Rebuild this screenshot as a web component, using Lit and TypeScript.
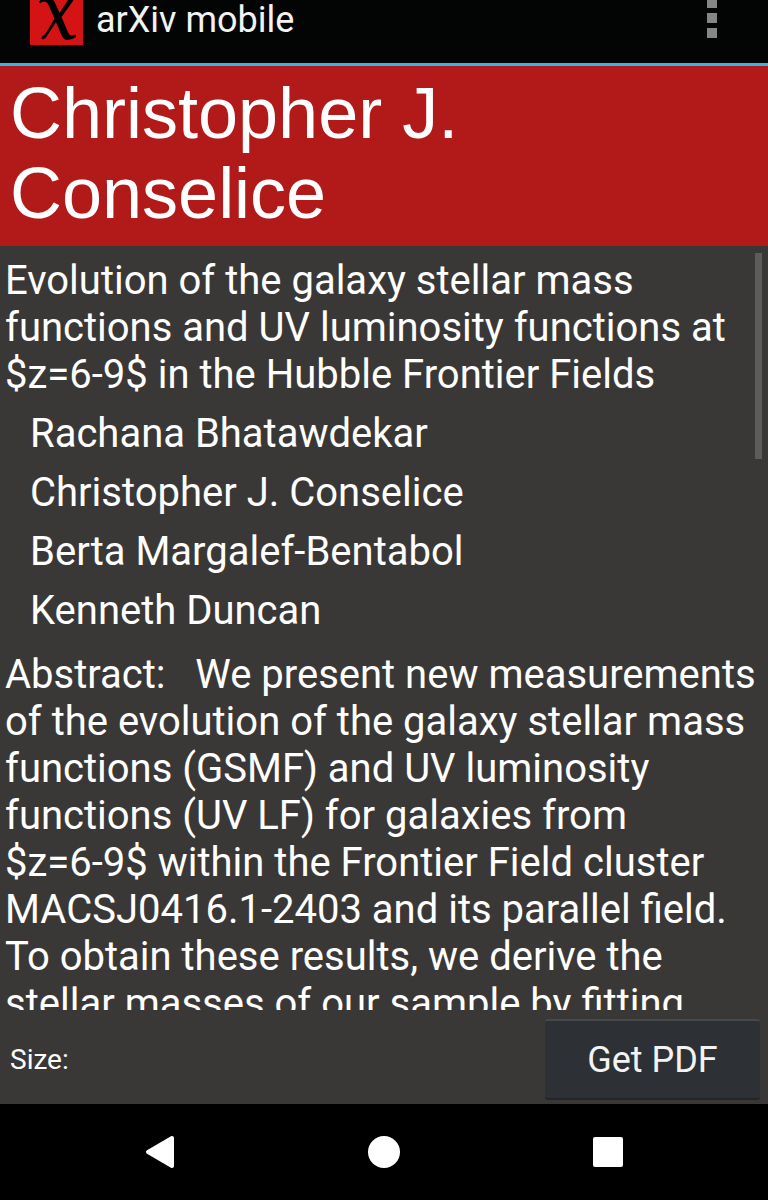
import { LitElement, html, css } from "lit";
import { customElement } from "lit/decorators.js";

const TITLE =
  "Evolution of the galaxy stellar mass functions and UV luminosity functions at $z=6-9$ in the Hubble Frontier Fields";

const AUTHORS = [
  "Rachana Bhatawdekar",
  "Christopher J. Conselice",
  "Berta Margalef-Bentabol",
  "Kenneth Duncan",
];

const ABSTRACT =
  "Abstract:   We present new measurements of the evolution of the galaxy stellar mass functions (GSMF) and UV luminosity functions (UV LF) for galaxies from $z=6-9$ within the Frontier Field cluster MACSJ0416.1-2403 and its parallel field. To obtain these results, we derive the stellar masses of our sample by fitting";

// Inline formulas between dollar signs stay on one line.
const withFormulas = (text: string) =>
  text
    .split(/(\$[^$]+\$)/)
    .map((part) =>
      part.startsWith("$") ? html`<span class="formula">${part}</span>` : part
    );

@customElement("action-bar")
class ActionBar extends LitElement {
  static styles = css`
    :host {
      display: block;
      flex: none;
    }
    .bar {
      display: flex;
      align-items: flex-end;
      height: 45px;
      padding: 0 28px 18px 30px;
      overflow: hidden;
      background: #030404;
      border-bottom: 3px solid #33b5e5;
    }
    .logo {
      display: block;
      flex: none;
      width: 53px;
      height: 53px;
    }
    .name {
      flex: 1;
      margin: 0 0 4px 13px;
      font-size: 36px;
      font-weight: 400;
      line-height: 42px;
      color: #f3f3f3;
    }
    .menu {
      flex: none;
      padding: 0;
      border: 0;
      background: none;
    }
    .dots {
      display: block;
      width: 56px;
      height: 56px;
    }
  `;

  render() {
    return html`
      <header class="bar">
        <svg class="logo" viewBox="0 0 53 53" aria-hidden="true">
          <rect width="53" height="53" fill="#d41414" />
          <path
            d="M9 10 Q12 5 18 5 Q23 5 26 13 L29.500 21 L38 8 L40 4 L45 4 L43 9 L31.500 25 L37 38 Q39 43.500 42 43.500 L46 42.500 L46 45 Q42 48 37 48 Q33 47.500 31 42 L26 30 L17.500 43 Q15 48 11.500 47 L12 44.500 Q14 44 16 41 L24.500 26.500 L18.500 13 Q17 9.500 14 9.500 Q12 9.500 10 11.500 Z"
            fill="#000"
          />
        </svg>
        <h1 class="name">arXiv mobile</h1>
        <button class="menu" aria-label="More options">
          <svg class="dots" viewBox="0 0 56 56" fill="#868686" aria-hidden="true">
            <rect x="23" y="9" width="10" height="10" />
            <rect x="23" y="24" width="10" height="10" />
            <rect x="23" y="39" width="10" height="10" />
          </svg>
        </button>
      </header>
    `;
  }
}

@customElement("paper-details")
class PaperDetails extends LitElement {
  static styles = css`
    :host {
      display: block;
      position: relative;
      flex: 1;
      min-height: 0;
      overflow: hidden;
      font-size: 40px;
      line-height: 47px;
      color: #fff;
    }
    .body {
      padding: 11px 5px 0;
    }
    .title {
      margin: 0 0 6px;
      font-size: 40px;
      font-weight: 400;
    }
    .authors {
      margin: 0 0 11px;
      padding: 0 0 0 25px;
      list-style: none;
    }
    .author {
      padding: 6px 0;
    }
    .abstract {
      margin: 0;
      white-space: pre-wrap;
    }
    .formula {
      white-space: nowrap;
    }
    .thumb {
      position: absolute;
      top: 7px;
      right: 6px;
      width: 7px;
      height: 27%;
      background: #5c5c5c;
    }
  `;

  render() {
    return html`
      <article class="body">
        <h3 class="title">${withFormulas(TITLE)}</h3>
        <ul class="authors">
          ${AUTHORS.map((name) => html`<li class="author">${name}</li>`)}
        </ul>
        <p class="abstract">${withFormulas(ABSTRACT)}</p>
      </article>
      <div class="thumb"></div>
    `;
  }
}

@customElement("system-nav")
class SystemNav extends LitElement {
  static styles = css`
    :host {
      display: block;
      flex: none;
      background: #000;
    }
    .nav {
      display: flex;
      justify-content: center;
      gap: 128px;
    }
    .key {
      padding: 0;
      border: 0;
      background: none;
    }
    .glyph {
      display: block;
      width: 96px;
      height: 96px;
      fill: #fff;
      stroke: #fff;
      stroke-linejoin: round;
    }
  `;

  render() {
    return html`
      <nav class="nav">
        <button class="key" aria-label="Back">
          <svg class="glyph" viewBox="0 0 96 96">
            <path d="M60 34 L36 48 L60 62 Z" stroke-width="4" />
          </svg>
        </button>
        <button class="key" aria-label="Home">
          <svg class="glyph" viewBox="0 0 96 96">
            <circle cx="48" cy="48" r="16" stroke="none" />
          </svg>
        </button>
        <button class="key" aria-label="Recent apps">
          <svg class="glyph" viewBox="0 0 96 96">
            <rect x="33" y="33" width="30" height="30" rx="2" stroke="none" />
          </svg>
        </button>
      </nav>
    `;
  }
}

@customElement("app-root")
class AppRoot extends LitElement {
  static styles = css`
    :host {
      display: flex;
      flex-direction: column;
      height: 100vh;
      overflow: hidden;
      background: #3a3837;
      color: #fff;
      font-family: Roboto, sans-serif;
    }
    .heading {
      flex: none;
      margin: 0;
      padding: 7px 10px 13px;
      background: #b21a1a;
      font-family: "Liberation Sans", sans-serif;
      font-size: 72px;
      font-weight: 400;
      line-height: 80px;
    }
    .footer {
      display: flex;
      flex: none;
      align-items: center;
      justify-content: space-between;
      padding: 9px 8px 4px 10px;
    }
    .size {
      font-size: 28px;
      line-height: 33px;
    }
    .pdf {
      width: 215px;
      height: 81px;
      padding: 2px 0 0;
      border: 0;
      border-top: 2px solid #46494c;
      border-bottom: 2px solid #232528;
      border-radius: 3px;
      background: #2d3035;
      color: #f3f3f3;
      font-family: inherit;
      font-size: 36px;
      line-height: 43px;
    }
  `;

  render() {
    return html`
      <action-bar></action-bar>
      <h2 class="heading">Christopher J. Conselice</h2>
      <paper-details></paper-details>
      <footer class="footer">
        <span class="size">Size:</span>
        <button class="pdf">Get PDF</button>
      </footer>
      <system-nav></system-nav>
    `;
  }
}
